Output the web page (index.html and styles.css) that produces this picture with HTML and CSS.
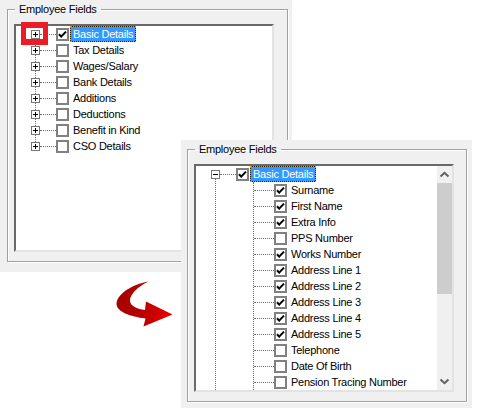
FILE: index.html
```html
<!DOCTYPE html>
<html lang="en">
<head>
  <meta charset="UTF-8">
  <title>Employee Fields</title>
  <link rel="stylesheet" href="styles.css">
</head>
<body>

  <svg class="defs" width="0" height="0">
    <symbol id="plus" viewBox="0 0 7 7"><path d="M1 3.5H6M3.5 1V6" stroke="#000" fill="none"/></symbol>
    <symbol id="minus" viewBox="0 0 7 7"><path d="M1 3.5H6" stroke="#000" fill="none"/></symbol>
    <symbol id="tick" viewBox="0 0 9 9"><path d="M1 4.2L3.2 6.6L8 1.6" stroke="#000" stroke-width="2" fill="none"/></symbol>
  </svg>

  <!-- collapsed tree -->
  <div class="panel panel-back">
    <fieldset class="group">
      <legend>Employee Fields</legend>
      <div class="tree">
        <div class="tree-body">
          <div class="rows">
            <div class="row"><span class="twist"><svg><use href="#plus"/></svg></span><span class="dots"></span><span class="check"><svg><use href="#tick"/></svg></span><span class="label selected">Basic Details</span></div>
            <div class="row"><span class="twist"><svg><use href="#plus"/></svg></span><span class="dots"></span><span class="check"></span><span class="label">Tax Details</span></div>
            <div class="row"><span class="twist"><svg><use href="#plus"/></svg></span><span class="dots"></span><span class="check"></span><span class="label">Wages/Salary</span></div>
            <div class="row"><span class="twist"><svg><use href="#plus"/></svg></span><span class="dots"></span><span class="check"></span><span class="label">Bank Details</span></div>
            <div class="row"><span class="twist"><svg><use href="#plus"/></svg></span><span class="dots"></span><span class="check"></span><span class="label">Additions</span></div>
            <div class="row"><span class="twist"><svg><use href="#plus"/></svg></span><span class="dots"></span><span class="check"></span><span class="label">Deductions</span></div>
            <div class="row"><span class="twist"><svg><use href="#plus"/></svg></span><span class="dots"></span><span class="check"></span><span class="label">Benefit in Kind</span></div>
            <div class="row"><span class="twist"><svg><use href="#plus"/></svg></span><span class="dots"></span><span class="check"></span><span class="label">CSO Details</span></div>
          </div>
        </div>
      </div>
    </fieldset>
  </div>

  <div class="callout"></div>

  <!-- expanded tree -->
  <div class="panel panel-front">
    <fieldset class="group">
      <legend>Employee Fields</legend>
      <div class="tree">
        <div class="tree-body">
          <div class="row"><span class="twist"><svg><use href="#minus"/></svg></span><span class="dots"></span><span class="check"><svg><use href="#tick"/></svg></span><span class="label selected">Basic Details</span></div>
          <div class="nest-outer">
            <div class="nest-inner">
              <div class="row"><span class="dots dots-child"></span><span class="check"><svg><use href="#tick"/></svg></span><span class="label">Surname</span></div>
              <div class="row"><span class="dots dots-child"></span><span class="check"><svg><use href="#tick"/></svg></span><span class="label">First Name</span></div>
              <div class="row"><span class="dots dots-child"></span><span class="check"><svg><use href="#tick"/></svg></span><span class="label">Extra Info</span></div>
              <div class="row"><span class="dots dots-child"></span><span class="check"></span><span class="label">PPS Number</span></div>
              <div class="row"><span class="dots dots-child"></span><span class="check"><svg><use href="#tick"/></svg></span><span class="label">Works Number</span></div>
              <div class="row"><span class="dots dots-child"></span><span class="check"><svg><use href="#tick"/></svg></span><span class="label">Address Line 1</span></div>
              <div class="row"><span class="dots dots-child"></span><span class="check"><svg><use href="#tick"/></svg></span><span class="label">Address Line 2</span></div>
              <div class="row"><span class="dots dots-child"></span><span class="check"><svg><use href="#tick"/></svg></span><span class="label">Address Line 3</span></div>
              <div class="row"><span class="dots dots-child"></span><span class="check"><svg><use href="#tick"/></svg></span><span class="label">Address Line 4</span></div>
              <div class="row"><span class="dots dots-child"></span><span class="check"><svg><use href="#tick"/></svg></span><span class="label">Address Line 5</span></div>
              <div class="row"><span class="dots dots-child"></span><span class="check"></span><span class="label">Telephone</span></div>
              <div class="row"><span class="dots dots-child"></span><span class="check"></span><span class="label">Date Of Birth</span></div>
              <div class="row"><span class="dots dots-child"></span><span class="check"></span><span class="label">Pension Tracing Number</span></div>
              <div class="row"></div>
            </div>
          </div>
        </div>
        <div class="scrollbar">
          <div class="scroll-btn">
            <svg width="11" height="7" viewBox="0 0 11 7"><path d="M1.5 5.5L5.5 1.8L9.5 5.5" stroke="#606060" stroke-width="2" fill="none"/></svg>
          </div>
          <div class="scroll-thumb"></div>
          <div class="scroll-track"></div>
          <div class="scroll-btn">
            <svg width="11" height="7" viewBox="0 0 11 7"><path d="M1.5 1.5L5.5 5.2L9.5 1.5" stroke="#606060" stroke-width="2" fill="none"/></svg>
          </div>
        </div>
      </div>
    </fieldset>
  </div>

  <svg class="arrow" width="64" height="53" viewBox="0 0 64 53">
    <defs>
      <linearGradient id="arrowFill" x1="0" x2="1" y1="0" y2="0">
        <stop offset="0" stop-color="#a40000"/>
        <stop offset="0.5" stop-color="#bb0000"/>
        <stop offset="1" stop-color="#ee0000"/>
      </linearGradient>
    </defs>
    <path d="M38.5 6.5C24 9 7 18 6.5 29C7 37 20 41.5 35.5 43.5L33.5 51.5L62.5 39.5L36 26.5L35 35C27 34 20.5 31 20 26C19.5 19 29 11 38.5 6.5Z" fill="url(#arrowFill)"/>
  </svg>

</body>
</html>
```

FILE: styles.css
```css
body {
  margin: 0;
  background-color: white;
  color: black;
  font-family: "Liberation Sans", Arial, sans-serif;
  font-size: 11px;
  letter-spacing: -0.25px;
  position: relative;
  height: 413px;
  overflow: hidden;
}

.defs {
  position: absolute;
}

.panel {
  background-color: #f0f0f0;
  box-sizing: border-box;
}

.panel-back {
  width: 292px;
  height: 272px;
  padding: 1px 4px 0 7px;
}

/* sits over the first panel */
.panel-front {
  position: absolute;
  left: 181px;
  top: 140px;
  width: 291px;
  height: 268px;
  padding: 1px 5px 0 6px;
}

.group {
  margin: 0;
  padding: 7px 12px 9px 6px;
  border: 1px solid #a0a0a0;
  box-shadow: 1px 1px 0 white, inset 1px 1px 0 white;
}

.group legend {
  margin-left: 1px;
  padding: 0 4px;
  height: 16px;
  line-height: 16px;
}

.tree {
  display: flex;
  box-sizing: border-box;
  width: 260px;
  height: 228px;
  background-color: white;
  border-top: 2px solid #696969;
  border-left: 2px solid #696969;
  border-right: 2px solid #e3e3e3;
  border-bottom: 2px solid #e3e3e3;
}

.tree-body {
  flex: 1;
  overflow: hidden;
}

.rows {
  position: relative;
}

/* line joining the top level items */
.rows::before {
  content: "";
  position: absolute;
  left: 19px;
  top: 8px;
  bottom: 8px;
  border-left: 1px dotted #707070;
}

.row {
  display: flex;
  align-items: center;
  height: 16px;
  position: relative;
}

.twist {
  width: 9px;
  height: 9px;
  margin-left: 15px;
  box-sizing: border-box;
  border: 1px solid #777;
  background-color: white;
  display: flex;
}

.twist svg {
  width: 7px;
  height: 7px;
}

.dots {
  width: 16px;
  border-top: 1px dotted #707070;
}

.dots-child {
  width: 20px;
}

.check {
  width: 13px;
  height: 13px;
  box-sizing: border-box;
  border: 2px solid #808080;
  background-color: white;
  display: flex;
}

.check svg {
  width: 9px;
  height: 9px;
}

.label {
  margin-left: 1px;
  padding: 0 2px;
  height: 16px;
  line-height: 14px;
  box-sizing: border-box;
  border: 1px dotted transparent;
  white-space: nowrap;
}

.selected {
  background: linear-gradient(#3399ff, #3399ff) padding-box, #2a1a00 border-box;
  color: white;
  border-color: #ff8c1a;
}

.nest-outer {
  margin: -3px 0 0 19px;
  padding: 3px 0 0 37px;
  border-left: 1px dotted #707070;
}

.nest-inner {
  border-left: 1px dotted #707070;
}

.scrollbar {
  width: 15px;
  background-color: #f0f0f0;
  display: flex;
  flex-direction: column;
}

.scroll-btn {
  height: 17px;
  display: flex;
  align-items: center;
  justify-content: center;
}

.scroll-thumb {
  height: 111px;
  background-color: #cdcdcd;
}

.scroll-track {
  flex: 1;
}

/* red box round the expander */
.callout {
  position: absolute;
  left: 21px;
  top: 22px;
  width: 17px;
  height: 11px;
  border: solid #ed1c24;
  border-width: 6px 5px;
}

.arrow {
  position: absolute;
  left: 110px;
  top: 275px;
}
```
